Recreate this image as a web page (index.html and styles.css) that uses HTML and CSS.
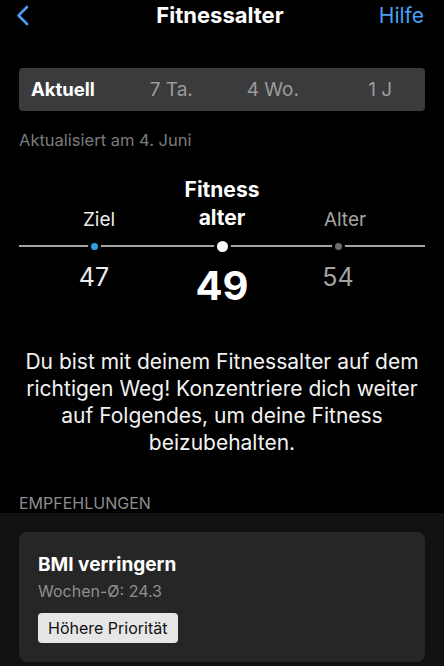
FILE: index.html
```html
<!DOCTYPE html>
<html lang="de">
<head>
    <meta charset="UTF-8">
    <meta name="viewport" content="width=device-width, initial-scale=1.0">
    <title>Fitnessalter</title>
    <link rel="stylesheet" href="styles.css">
</head>
<body>
    <header class="nav-bar">
        <a class="nav-back" href="#">
            <svg width="13" height="21" viewBox="0 0 13 21">
                <path d="M11 2 L2.5 10.5 L11 19" fill="none" stroke="#4a9ff5" stroke-width="2.6" stroke-linecap="round" stroke-linejoin="round"/>
            </svg>
        </a>
        <h1 class="nav-title">Fitnessalter</h1>
        <a class="nav-help" href="#">Hilfe</a>
    </header>

    <div class="segments">
        <div class="segment active">Aktuell</div>
        <div class="segment">7 Ta.</div>
        <div class="segment">4 Wo.</div>
        <div class="segment last">1 J</div>
    </div>

    <p class="updated">Aktualisiert am 4. Juni</p>

    <div class="ages">
        <div class="age-row labels">
            <span></span>
            <span class="label goal">Ziel</span>
            <span class="label current">Fitness<br>alter</span>
            <span class="label real">Alter</span>
        </div>
        <div class="age-row track">
            <span></span>
            <span class="dot dot-goal"></span>
            <span class="dot dot-current"></span>
            <span class="dot dot-real"></span>
        </div>
        <div class="age-row values">
            <span></span>
            <span class="value goal">47</span>
            <span class="value current">49</span>
            <span class="value real">54</span>
        </div>
    </div>

    <p class="message">Du bist mit deinem Fitnessalter auf dem richtigen Weg! Konzentriere dich weiter auf Folgendes, um deine Fitness beizubehalten.</p>

    <h2 class="section-title">EMPFEHLUNGEN</h2>

    <section class="recommendations">
        <div class="rec-card">
            <h3>BMI verringern</h3>
            <p>Wochen-Ø: 24.3</p>
            <button class="priority-btn">Höhere Priorität</button>
        </div>
    </section>
</body>
</html>
```

FILE: styles.css
```css
body {
    font-family: Inter, "Liberation Sans", sans-serif;
    background: #000;
    color: #fff;
    margin: 0;
    width: 444px;
    min-height: 666px;
    display: flex;
    flex-direction: column;
}
p, h1, h2, h3 {
    margin: 0;
}
.nav-bar {
    display: grid;
    grid-template-columns: 1fr auto 1fr;
    align-items: center;
    height: 30px;
    padding: 0 20px 0 16px;
}
.nav-back {
    display: flex;
}
.nav-title {
    font-size: 22px;
    font-weight: 700;
    line-height: 30px;
}
.nav-help {
    justify-self: end;
    color: #4a9ff5;
    font-size: 21px;
    text-decoration: none;
}
.segments {
    display: grid;
    grid-template-columns: repeat(4, 1fr);
    margin: 38px 19px 0;
    height: 43px;
    background: #3b3b3d;
    border-radius: 4px;
}
.segment {
    text-align: center;
    line-height: 43px;
    font-size: 19px;
    color: #9c9c9c;
}
.segment.active {
    color: #fff;
    font-weight: 700;
    font-size: 18.5px;
    text-align: left;
    padding-left: 12px;
}
.segment.last {
    padding-left: 12px;
}
.updated {
    margin: 19px 19px 0;
    font-size: 16.5px;
    line-height: 20px;
    color: #7b7b7d;
}
.ages {
    margin: 26px 19px 0;
}
.age-row {
    display: grid;
    grid-template-columns: 25px 100px 156px 76px;
    justify-items: center;
}
.labels {
    align-items: end;
}
.label {
    font-size: 19px;
    line-height: 24px;
}
.label.goal {
    color: #ececec;
    margin-left: 10px;
}
.label.current {
    font-weight: 700;
    font-size: 21px;
    line-height: 28px;
    text-align: center;
}
.label.real {
    color: #a3a3a3;
    margin-left: 14px;
}
.track {
    margin-top: 6px;
    height: 16px;
    align-items: center;
    background: linear-gradient(#000 7px, #a4a4a4 7px, #a4a4a4 9px, #000 9px);
}
.dot {
    border-radius: 50%;
    box-shadow: 0 0 0 3px #000;
}
.dot-goal {
    width: 7px;
    height: 7px;
    background: #2d9fe6;
}
.dot-current {
    width: 11px;
    height: 11px;
    background: #fff;
}
.dot-real {
    width: 7px;
    height: 7px;
    background: #6e6e6e;
}
.values {
    margin-top: 8px;
    align-items: start;
}
.value {
    font-size: 25px;
    line-height: 30px;
    color: #ececec;
}
.value.current {
    font-size: 40px;
    font-weight: 700;
    line-height: 48px;
    color: #fff;
}
.value.real {
    color: #a3a3a3;
}
.message {
    margin: 38px 19px 0;
    font-size: 21px;
    line-height: 27px;
    text-align: center;
    color: #f2f2f2;
}
.section-title {
    margin: 37px 19px 0;
    font-size: 16px;
    font-weight: 400;
    line-height: 20px;
    color: #8d8d8f;
}
.recommendations {
    flex: 1;
    background: #111;
    padding: 19px;
}
.rec-card {
    background: #262626;
    border-radius: 8px;
    padding: 21px 19px 19px;
}
.rec-card h3 {
    font-size: 19px;
    line-height: 24px;
    font-weight: 700;
}
.rec-card p {
    margin-top: 3px;
    font-size: 16px;
    line-height: 22px;
    color: #8f8f8f;
}
.priority-btn {
    margin-top: 11px;
    height: 30px;
    padding: 0 10px;
    border: none;
    border-radius: 4px;
    background: #e6e6e6;
    color: #111;
    font-family: inherit;
    font-size: 16px;
}
```
